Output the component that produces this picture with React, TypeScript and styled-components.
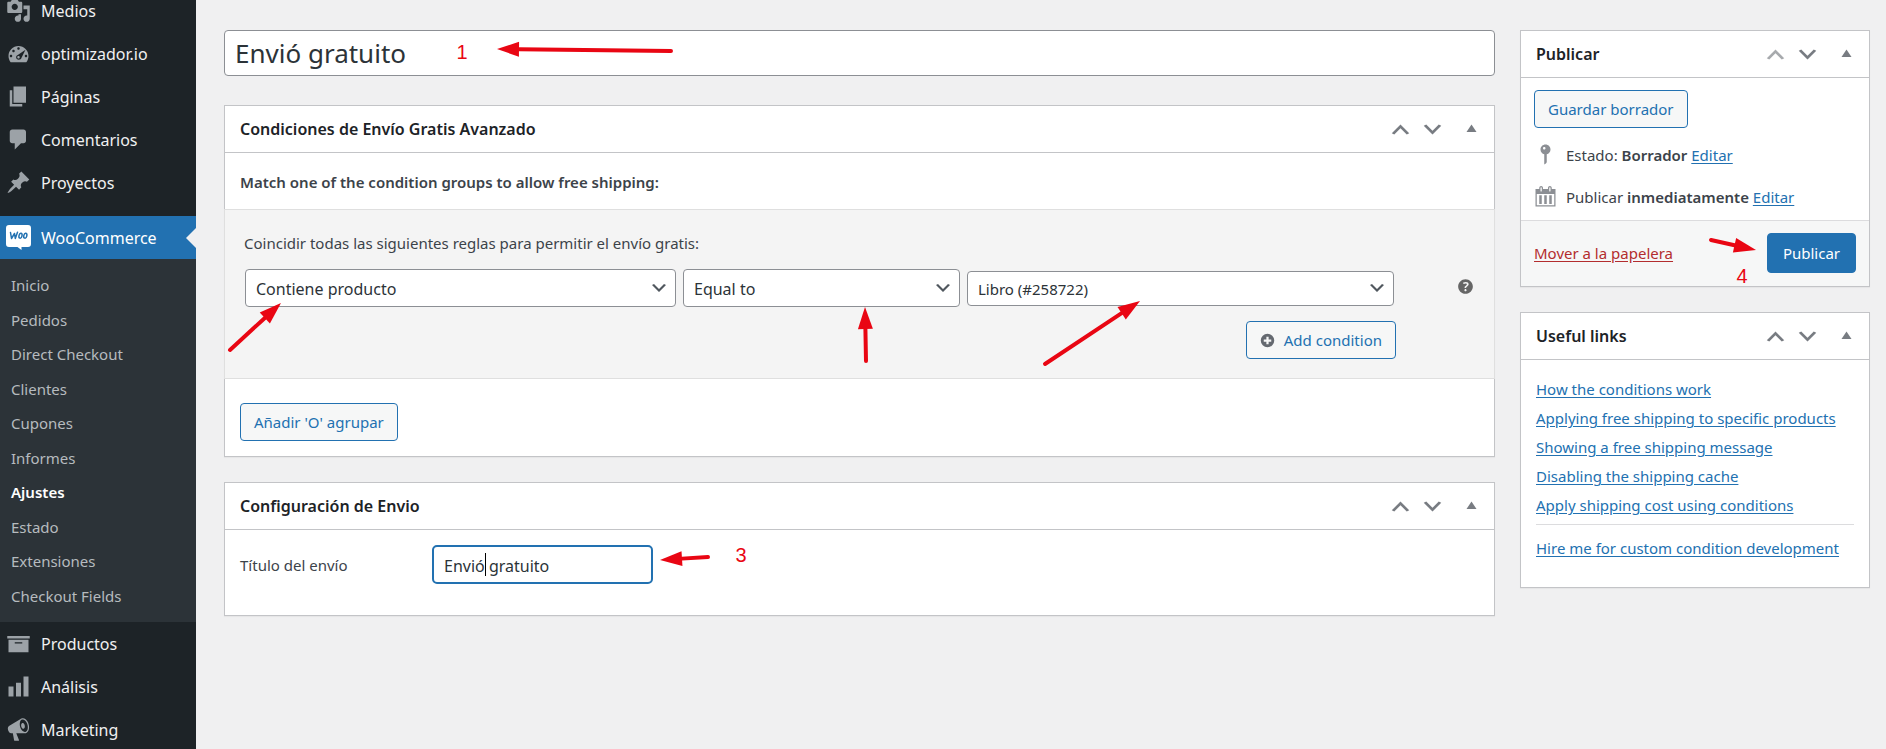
import React from "react";
import styled, { createGlobalStyle, css } from "styled-components";

const color = {
  page: "#f0f0f1",
  menu: "#1d2327",
  submenu: "#2c3338",
  menuIcon: "#9ca2a7",
  accent: "#2271b1",
  border: "#c3c4c7",
  softBorder: "#dfdfdf",
  control: "#8c8f94",
  text: "#3c434a",
  heading: "#1d2327",
  muted: "#787c82",
  surface: "#f6f7f7",
  danger: "#b32d2e",
  mark: "#e90613",
};

const GlobalStyle = createGlobalStyle`
  *, *::before, *::after { box-sizing: border-box; }
  body {
    margin: 0;
    background: ${color.page};
    color: ${color.text};
    font-family: "Noto Sans", "Open Sans", sans-serif;
    font-size: 15px;
    line-height: 22px;
  }
  button, input, select { font-family: inherit; }
  a { color: ${color.accent}; text-underline-offset: 2px; }
  strong { font-weight: 600; }
`;

/* ---------- icons ---------- */

const paths = {
  media:
    "M13 11V4c0-.55-.45-1-1-1h-1.67L9 1H5L3.67 3H2c-.55 0-1 .45-1 1v7c0 .55.45 1 1 1h10c.55 0 1-.45 1-1zM7 4.5c1.38 0 2.5 1.12 2.5 2.5S8.38 9.5 7 9.5 4.5 8.38 4.5 7 5.62 4.5 7 4.5zM14 6h5v10.5c0 1.38-1.12 2.5-2.5 2.5S14 17.88 14 16.5s1.12-2.5 2.5-2.5c.17 0 .34.02.5.05V9h-3V6zm-4 8.05V13h2v3.5c0 1.38-1.12 2.5-2.5 2.5S7 17.88 7 16.5 8.12 14 9.5 14c.17 0 .34.02.5.05z",
  dashboard:
    "M3.76 17h12.48c1.1-1.37 1.76-3.11 1.76-5 0-4.42-3.58-8-8-8s-8 3.58-8 8c0 1.89.66 3.63 1.76 5zM10 5c.55 0 1 .45 1 1s-.45 1-1 1-1-.45-1-1 .45-1 1-1zM6 7c.55 0 1 .45 1 1s-.45 1-1 1-1-.45-1-1 .45-1 1-1zM15.6 7l-3.1 6.2c-.3 1.1-1.2 1.8-2.3 1.8-1.2 0-2.1-.9-2.1-2 0-1 .6-1.8 1.6-2.1L15.6 7zM4 11c.55 0 1 .45 1 1s-.45 1-1 1-1-.45-1-1 .45-1 1-1zm12 0c.55 0 1 .45 1 1s-.45 1-1 1-1-.45-1-1 .45-1 1-1zm-5 2c0-.55-.45-1-1-1s-1 .45-1 1 .45 1 1 1 1-.45 1-1z",
  pages: "M6 15V2h10v13H6zm-1 1h8v2H3V5h2v11z",
  comments: "M5 2h9c1.1 0 2 .9 2 2v7c0 1.1-.9 2-2 2h-2l-5 5v-5H5c-1.1 0-2-.9-2-2V4c0-1.1.9-2 2-2z",
  pin: "M10.44 3.02l1.82-1.82 6.36 6.35-1.83 1.82c-1.05-.68-2.48-.57-3.41.36l-.75.75c-.92.93-1.04 2.35-.35 3.41l-1.83 1.82-2.41-2.41-2.8 2.79c-.42.42-3.38 2.71-3.8 2.29s1.86-3.39 2.28-3.81l2.79-2.79L4.1 9.36l1.83-1.82c1.05.69 2.48.57 3.4-.36l.75-.75c.93-.92 1.05-2.35.36-3.41z",
  archive: "M19 4v2H1V4h18zM2 7h16v10H2V7zm11 3V9H7v1h6z",
  chart: "M18 18V2h-4v16h4zm-6 0V7H8v11h4zm-6 0v-8H2v8h4z",
  megaphone:
    "M18.15 5.94c.46 1.62.38 3.22-.02 4.48-.42 1.28-1.26 2.18-2.3 2.48-.16.06-.26.06-.4.06-.06.02-.12.02-.18.02-.06.02-.14.02-.22.02h-6.8l2.22 5.5c.02.14-.06.26-.14.34-.08.1-.24.16-.34.16H6.95c-.1 0-.26-.06-.34-.16-.08-.08-.16-.2-.14-.34l-1-5.5H4.25l-.02-.02c-.5.06-1.08-.18-1.54-.62s-.88-1.08-1.06-1.88c-.24-.8-.2-1.56-.02-2.2.18-.62.58-1.08 1.06-1.3l.02-.02 9-5.4c.1-.06.18-.1.24-.16.06-.04.14-.08.24-.12.16-.08.28-.12.5-.18 1.04-.3 2.24.1 3.22.98s1.84 2.24 2.26 3.86zm-2.58 5.98h-.02c.4-.1.74-.34 1.04-.7.58-.7.86-1.76.86-3.04 0-.64-.1-1.3-.28-1.98-.34-1.36-1.02-2.5-1.78-3.24s-1.68-1.1-2.46-.88c-.82.22-1.4.96-1.7 2-.32 1.04-.28 2.36.06 3.72.38 1.36 1 2.5 1.8 3.24.78.74 1.62 1.1 2.48.88zm-2.54-7.08c.22-.04.42-.02.62.04.38.16.76.48 1.02 1s.42 1.2.42 1.78c0 .3-.04.56-.12.8-.18.48-.44.84-.86.94-.34.1-.8-.06-1.14-.4s-.64-.86-.78-1.5c-.18-.62-.12-1.24.02-1.72s.48-.84.82-.94z",
  up: "M15 14l-5-5-5 5-2-1 7-7 7 7z",
  down: "M5 6l5 5 5-5 2 1-7 7-7-7z",
  toggle: "M10 6l4 6H6z",
  help: "M17 10c0-3.87-3.14-7-7-7-3.87 0-7 3.13-7 7s3.13 7 7 7c3.86 0 7-3.13 7-7zm-6.3 1.48H9.14v-.43c0-.38.08-.7.24-.98s.46-.57.88-.89c.41-.29.68-.53.81-.71.14-.18.2-.39.2-.62 0-.25-.09-.44-.28-.58-.19-.13-.45-.19-.79-.19-.58 0-1.25.19-2 .57l-.64-1.28c.87-.49 1.8-.74 2.77-.74.81 0 1.45.2 1.92.58.48.39.71.91.71 1.55 0 .43-.09.8-.29 1.11-.19.32-.57.67-1.11 1.06-.38.28-.61.49-.71.63-.1.15-.15.34-.15.57v.35zm-1.47 2.74c-.18-.17-.27-.42-.27-.73 0-.33.08-.58.26-.75s.43-.25.77-.25c.32 0 .57.09.75.26s.27.42.27.74c0 .3-.09.55-.27.72-.18.18-.43.27-.75.27-.33 0-.58-.09-.76-.26z",
  add: "M10 1a9 9 0 1 0 0 18 9 9 0 0 0 0-18zM8.5 5h3v3.5H15v3h-3.500V15h-3v-3.500H5v-3h3.500z",
  status:
    "M14 6c0 1.86-1.28 3.41-3 3.86V16c0 1-2 2-2 2V9.86c-1.72-.45-3-2-3-3.86 0-2.21 1.79-4 4-4s4 1.79 4 4zM8 5c0 .55.45 1 1 1s1-.45 1-1-.45-1-1-1-1 .45-1 1z",
  calendar:
    "M15 4h3v14H2V4h3V3c0-.83.67-1.5 1.5-1.5S8 2.17 8 3v1h4V3c0-.83.67-1.5 1.5-1.5S15 2.17 15 3v1zM6 3v2.5c0 .28.22.5.5.5s.5-.22.5-.5V3c0-.28-.22-.5-.5-.5S6 2.72 6 3zm7 0v2.5c0 .28.22.5.5.5s.5-.22.5-.5V3c0-.28-.22-.5-.5-.5s-.5.22-.5.5zm4 14V8H3v9h14zM7 16V9H5v7h2zm4 0V9H9v7h2zm4 0V9h-2v7h2z",
};

type IconName = keyof typeof paths;

const Svg = styled.svg`
  display: block;
  flex: none;
  fill: currentColor;
`;

const Icon = ({ name, size = 25 }: { name: IconName; size?: number }) => (
  <Svg width={size} height={size} viewBox="0 0 20 20" aria-hidden="true">
    <path fillRule="evenodd" d={paths[name]} />
  </Svg>
);

const WooLogo = () => (
  <Svg width="25" height="25" viewBox="0 0 25 25" aria-hidden="true">
    <path fill="#fff" d="M3 0h19a3 3 0 0 1 3 3v16a3 3 0 0 1-3 3h-6.500v3l-4-3H3a3 3 0 0 1-3-3V3a3 3 0 0 1 3-3z" />
    <g fill="none" stroke={color.accent} strokeWidth="1.5" strokeLinecap="round" strokeLinejoin="round">
      <path d="M4.500 7.500l1 6 3-5 .8 5 2.200-6.300" />
      <ellipse cx="14.5" cy="10.7" rx="1.5" ry="2.5" transform="rotate(14 14.5 10.7)" />
      <ellipse cx="19.3" cy="10.7" rx="1.5" ry="2.5" transform="rotate(14 19.3 10.7)" />
    </g>
  </Svg>
);

/* ---------- red markings ---------- */

const MarkLayer = styled.svg`
  position: absolute;
  top: 0;
  left: 0;
  width: 1px;
  height: 1px;
  overflow: visible;
  pointer-events: none;
  z-index: 1;
`;

const MarkNumber = styled.text`
  fill: ${color.mark};
  font-family: "Liberation Sans", sans-serif;
  font-size: 20px;
  text-anchor: middle;
`;

type Point = [number, number];

const Arrow = ({ tip, tail }: { tip: Point; tail: Point }) => {
  const length = Math.hypot(tip[0] - tail[0], tip[1] - tail[1]);
  const ux = (tip[0] - tail[0]) / length;
  const uy = (tip[1] - tail[1]) / length;
  const bx = tip[0] - ux * 22;
  const by = tip[1] - uy * 22;
  return (
    <g>
      <line x1={tail[0]} y1={tail[1]} x2={bx} y2={by} stroke={color.mark} strokeWidth="4" strokeLinecap="round" />
      <polygon
        fill={color.mark}
        points={`${tip[0]},${tip[1]} ${bx - uy * 7.5},${by + ux * 7.5} ${bx + uy * 7.5},${by - ux * 7.5}`}
      />
    </g>
  );
};

/* ---------- side menu ---------- */

const Page = styled.div`
  display: grid;
  grid-template-columns: 196px minmax(0, 1fr);
  height: 100vh;
  overflow: hidden;
`;

const SideMenu = styled.nav`
  background: ${color.menu};
  overflow: hidden;
`;

const MenuGroup = styled.ul<{ $first?: boolean }>`
  list-style: none;
  padding: 0;
  margin: ${(p) => (p.$first ? "-11px 0 12px" : "0")};
`;

const MenuLink = styled.a<{ $active?: boolean }>`
  position: relative;
  display: flex;
  align-items: center;
  gap: 10px;
  height: 43px;
  padding-left: 6px;
  font-size: 16px;
  color: ${color.page};
  text-decoration: none;

  svg { color: ${color.menuIcon}; }

  ${(p) =>
    p.$active &&
    css`
      background: ${color.accent};
      color: #fff;

      &::after {
        content: "";
        position: absolute;
        right: 0;
        border: 10px solid transparent;
        border-left-width: 0;
        border-right-color: ${color.page};
      }
    `}
`;

const SubMenu = styled.ul`
  display: flex;
  flex-direction: column;
  justify-content: space-between;
  height: 363px;
  margin: 0;
  padding: 9px 0;
  list-style: none;
  background: ${color.submenu};
`;

const SubLink = styled.a<{ $current?: boolean }>`
  display: block;
  padding: 6px 11px;
  color: ${(p) => (p.$current ? "#fff" : "#b6bbbf")};
  font-weight: ${(p) => (p.$current ? 600 : 400)};
  text-decoration: none;
`;

const topItems: [string, IconName][] = [
  ["Medios", "media"],
  ["optimizador.io", "dashboard"],
  ["Páginas", "pages"],
  ["Comentarios", "comments"],
  ["Proyectos", "pin"],
];
const subItems = ["Inicio", "Pedidos", "Direct Checkout", "Clientes", "Cupones", "Informes", "Ajustes", "Estado", "Extensiones", "Checkout Fields"];
const bottomItems: [string, IconName][] = [
  ["Productos", "archive"],
  ["Análisis", "chart"],
  ["Marketing", "megaphone"],
];

const MenuItems = ({ items }: { items: [string, IconName][] }) => (
  <>
    {items.map(([label, icon]) => (
      <li key={label}>
        <MenuLink href="#">
          <Icon name={icon} />
          {label}
        </MenuLink>
      </li>
    ))}
  </>
);

/* ---------- panels ---------- */

const Content = styled.main`
  display: grid;
  grid-template-columns: minmax(0, 1fr) 350px;
  align-items: start;
  gap: 25px;
  padding: 30px 16px 0 28px;
`;

const Column = styled.div`
  display: flex;
  flex-direction: column;
  gap: 25px;
`;

const PanelBox = styled.section`
  position: relative;
  background: #fff;
  border: 1px solid ${color.border};
  box-shadow: 0 1px 1px rgba(0, 0, 0, 0.04);
`;

const PanelHeader = styled.header`
  display: flex;
  align-items: center;
  height: 47px;
  padding-left: 15px;
  border-bottom: 1px solid ${color.border};
`;

const PanelTitle = styled.h2`
  flex: 1;
  margin: 0;
  font-size: 16px;
  font-weight: 600;
  color: ${color.heading};
`;

const HandleButton = styled.button<{ $wide?: boolean }>`
  display: grid;
  place-items: center;
  width: ${(p) => (p.$wide ? 46 : 32)}px;
  height: 46px;
  padding: 0;
  border: 0;
  background: none;
  color: ${color.muted};

  &:disabled { color: #a7aaad; }
`;

const Panel = ({ title, first, children }: { title: string; first?: boolean; children: React.ReactNode }) => (
  <PanelBox>
    <PanelHeader>
      <PanelTitle>{title}</PanelTitle>
      <HandleButton aria-label="Subir" disabled={first}>
        <Icon name="up" />
      </HandleButton>
      <HandleButton aria-label="Bajar">
        <Icon name="down" />
      </HandleButton>
      <HandleButton $wide aria-label="Alternar panel">
        <Icon name="toggle" />
      </HandleButton>
    </PanelHeader>
    {children}
  </PanelBox>
);

const Button = styled.button<{ $primary?: boolean }>`
  display: inline-flex;
  align-items: center;
  gap: 9px;
  height: ${(p) => (p.$primary ? 40 : 38)}px;
  padding: 0 ${(p) => (p.$primary ? 15 : 13)}px;
  border: 1px solid ${color.accent};
  border-radius: 4px;
  background: ${(p) => (p.$primary ? color.accent : color.surface)};
  color: ${(p) => (p.$primary ? "#fff" : color.accent)};
  font-size: 15px;
  white-space: nowrap;

  svg { color: #646970; }
`;

const fieldBase = css`
  border: 1px solid ${color.control};
  border-radius: 4px;
  background: #fff;
  color: ${color.submenu};
  font-size: 16px;
  outline: none;
`;

/* ---------- title ---------- */

const TitleBox = styled.div`
  position: relative;
  margin-bottom: 4px;
`;

const TitleInput = styled.input`
  ${fieldBase}
  display: block;
  width: 100%;
  height: 46px;
  padding: 0 10px;
  font-size: 26px;
`;

/* ---------- conditions ---------- */

const Intro = styled.p`
  margin: 0;
  padding: 18px 15px 16px;
  font-weight: 600;
`;

const Group = styled.div`
  position: relative;
  margin: 0 -1px;
  padding: 22px 18px 19px 20px;
  border: 1px solid ${color.softBorder};
  background: #f4f4f4;
`;

const GroupText = styled.p`
  margin: 0 0 15px -1px;
`;

const ConditionRow = styled.div`
  display: flex;
  align-items: center;
  gap: 61px;
  margin-bottom: 14px;
`;

const Fields = styled.div`
  display: grid;
  grid-template-columns: 431fr 277fr 427fr;
  align-items: center;
  gap: 7px;
  flex: 1;
`;

const SelectBox = styled.span`
  position: relative;
  display: block;
  color: #50575e;

  svg {
    position: absolute;
    top: 50%;
    right: 7px;
    transform: translateY(-50%);
    pointer-events: none;
  }
`;

const SelectInput = styled.select<{ $compact?: boolean }>`
  ${fieldBase}
  appearance: none;
  display: block;
  width: 100%;
  height: ${(p) => (p.$compact ? 35 : 38)}px;
  padding: 2px 30px 0 10px;
  font-size: ${(p) => (p.$compact ? 15 : 16)}px;
`;

const Select = ({ label, value, compact }: { label: string; value: string; compact?: boolean }) => (
  <SelectBox>
    <SelectInput aria-label={label} $compact={compact} defaultValue={value}>
      <option>{value}</option>
    </SelectInput>
    <Icon name="down" size={20} />
  </SelectBox>
);

const HelpButton = styled.button`
  display: grid;
  place-items: center;
  width: 21px;
  height: 24px;
  margin-bottom: 3px;
  padding: 0;
  border: 0;
  background: none;
  color: #666;
`;

const GroupActions = styled.div`
  display: flex;
  justify-content: flex-end;
  padding-right: 80px;
`;

const PanelActions = styled.div`
  padding: 24px 15px 15px;
`;

/* ---------- shipping settings ---------- */

const SettingRow = styled.div`
  display: grid;
  grid-template-columns: 192px 221px;
  align-items: center;
  padding: 15px 15px 31px;
`;

const FocusField = styled.div`
  position: relative;
`;

const SettingInput = styled.input`
  ${fieldBase}
  display: block;
  width: 100%;
  height: 39px;
  padding: 2px 10px 0;
  border: 2px solid ${color.accent};
  border-radius: 5px;
`;

const Caret = styled.span`
  position: absolute;
  top: 8px;
  left: 53px;
  width: 1px;
  height: 23px;
  background: #000;
`;

/* ---------- publish ---------- */

const PublishBody = styled.div`
  padding: 12px 13px 11px;
`;

const StatusList = styled.ul`
  display: flex;
  flex-direction: column;
  gap: 17px;
  margin: 14px 0 0 -1px;
  padding: 0;
  list-style: none;

  li {
    display: flex;
    align-items: center;
    gap: 8px;
    height: 25px;
  }

  svg { color: #8c8f94; }
`;

const PublishFooter = styled.footer`
  display: flex;
  align-items: center;
  justify-content: space-between;
  padding: 12px 13px 13px;
  border-top: 1px solid #dcdcde;
  background: ${color.surface};
`;

const TrashLink = styled.a`
  color: ${color.danger};
`;

/* ---------- useful links ---------- */

const LinkList = styled.ul`
  display: flex;
  flex-direction: column;
  gap: 7px;
  margin: 0;
  padding: 18px 15px 28px;
  list-style: none;
  white-space: nowrap;
`;

const LastLink = styled.li`
  margin-top: 1px;
  padding-top: 12px;
  border-top: 1px solid #dcdcde;
`;

const links = [
  "How the conditions work",
  "Applying free shipping to specific products",
  "Showing a free shipping message",
  "Disabling the shipping cache",
  "Apply shipping cost using conditions",
];

export default function App() {
  return (
    <>
      <GlobalStyle />
      <Page>
        <SideMenu aria-label="Menú principal">
          <MenuGroup $first>
            <MenuItems items={topItems} />
          </MenuGroup>
          <MenuGroup>
            <li>
              <MenuLink href="#" $active>
                <WooLogo />
                WooCommerce
              </MenuLink>
              <SubMenu>
                {subItems.map((label) => (
                  <li key={label}>
                    <SubLink href="#" $current={label === "Ajustes"}>
                      {label}
                    </SubLink>
                  </li>
                ))}
              </SubMenu>
            </li>
            <MenuItems items={bottomItems} />
          </MenuGroup>
        </SideMenu>

        <Content>
          <Column>
            <TitleBox>
              <TitleInput aria-label="Título" defaultValue="Envió gratuito" />
              <MarkLayer>
                <MarkNumber x="238" y="29">1</MarkNumber>
                <Arrow tip={[273, 19]} tail={[447, 21]} />
              </MarkLayer>
            </TitleBox>

            <Panel title="Condiciones de Envío Gratis Avanzado">
              <Intro>Match one of the condition groups to allow free shipping:</Intro>
              <Group>
                <GroupText>Coincidir todas las siguientes reglas para permitir el envío gratis:</GroupText>
                <ConditionRow>
                  <Fields>
                    <Select label="Condición" value="Contiene producto" />
                    <Select label="Operador" value="Equal to" />
                    <Select label="Producto" value="Libro (#258722)" compact />
                  </Fields>
                  <HelpButton aria-label="Ayuda">
                    <Icon name="help" size={21} />
                  </HelpButton>
                </ConditionRow>
                <GroupActions>
                  <Button>
                    <Icon name="add" size={15} />
                    Add condition
                  </Button>
                </GroupActions>
                <MarkLayer>
                  <Arrow tip={[56, 93]} tail={[5, 140]} />
                  <Arrow tip={[640, 97]} tail={[641, 151]} />
                  <Arrow tip={[915, 91]} tail={[820, 154]} />
                </MarkLayer>
              </Group>
              <PanelActions>
                <Button>Añadir 'O' agrupar</Button>
              </PanelActions>
            </Panel>

            <Panel title="Configuración de Envio">
              <SettingRow>
                <label htmlFor="shipping-title">Título del envío</label>
                <FocusField>
                  <SettingInput id="shipping-title" defaultValue="Envió gratuito" />
                  <Caret />
                </FocusField>
              </SettingRow>
              <MarkLayer>
                <Arrow tip={[435, 77]} tail={[483, 74]} />
                <MarkNumber x="516" y="79">3</MarkNumber>
              </MarkLayer>
            </Panel>
          </Column>

          <Column>
            <Panel title="Publicar" first>
              <PublishBody>
                <Button>Guardar borrador</Button>
                <StatusList>
                  <li>
                    <Icon name="status" />
                    <span>
                      Estado: <strong>Borrador</strong> <a href="#">Editar</a>
                    </span>
                  </li>
                  <li>
                    <Icon name="calendar" />
                    <span>
                      Publicar <strong>inmediatamente</strong> <a href="#">Editar</a>
                    </span>
                  </li>
                </StatusList>
              </PublishBody>
              <PublishFooter>
                <TrashLink href="#">Mover a la papelera</TrashLink>
                <Button $primary>Publicar</Button>
              </PublishFooter>
              <MarkLayer>
                <Arrow tip={[235, 219]} tail={[190, 209]} />
                <MarkNumber x="221" y="252">4</MarkNumber>
              </MarkLayer>
            </Panel>

            <Panel title="Useful links">
              <LinkList>
                {links.map((label) => (
                  <li key={label}>
                    <a href="#">{label}</a>
                  </li>
                ))}
                <LastLink>
                  <a href="#">Hire me for custom condition development</a>
                </LastLink>
              </LinkList>
            </Panel>
          </Column>
        </Content>
      </Page>
    </>
  );
}
